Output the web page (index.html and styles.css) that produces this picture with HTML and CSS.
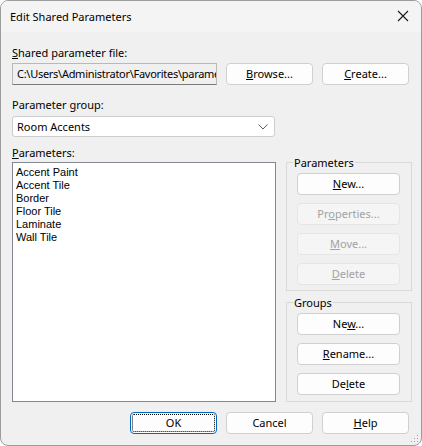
FILE: index.html
```html
<!DOCTYPE html>
<html lang="en">
<head>
<meta charset="utf-8">
<title>Edit Shared Parameters</title>
<link rel="stylesheet" href="styles.css">
</head>
<body>
<div class="dialog">
  <div class="titlebar">
    <span class="title">Edit Shared Parameters</span>
    <svg class="close" width="12" height="12" viewBox="0 0 12 12"><path d="M1 1L11 11M11 1L1 11" stroke="#1a1a1a" stroke-width="1.1" fill="none"/></svg>
  </div>
  <div class="content">
    <div class="label label-file"><u>S</u>hared parameter file:</div>
    <div class="file-row">
      <div class="edit">C:\Users\Administrator\Favorites\parame</div>
      <button class="btn"><u>B</u>rowse...</button>
      <button class="btn"><u>C</u>reate...</button>
    </div>
    <div class="label label-group">Parameter <u>g</u>roup:</div>
    <div class="combo">
      <span>Room Accents</span>
      <svg class="chev" width="10" height="6" viewBox="0 0 10 6"><path d="M0.5 0.5L5 5L9.5 0.5" stroke="#5f5f5f" stroke-width="1" fill="none"/></svg>
    </div>
    <div class="label label-params"><u>P</u>arameters:</div>
    <div class="main">
      <ul class="listbox">
        <li>Accent Paint</li>
        <li>Accent Tile</li>
        <li>Border</li>
        <li>Floor Tile</li>
        <li>Laminate</li>
        <li>Wall Tile</li>
      </ul>
      <div class="side">
        <fieldset class="group group-params">
          <legend>Parameters</legend>
          <button class="btn"><u>N</u>ew...</button>
          <button class="btn" disabled>Pr<u>o</u>perties...</button>
          <button class="btn" disabled><u>M</u>ove...</button>
          <button class="btn" disabled><u>D</u>elete</button>
        </fieldset>
        <fieldset class="group group-groups">
          <legend>Groups</legend>
          <button class="btn">Ne<u>w</u>...</button>
          <button class="btn"><u>R</u>ename...</button>
          <button class="btn">De<u>l</u>ete</button>
        </fieldset>
      </div>
    </div>
    <div class="footer">
      <button class="btn btn-default">OK</button>
      <button class="btn">Cancel</button>
      <button class="btn"><u>H</u>elp</button>
    </div>
  </div>
  <svg class="grip" width="8" height="8" viewBox="0 0 8 8">
    <rect x="6" y="0" width="1" height="1" fill="#a0a0a0"/>
    <rect x="3" y="3" width="1" height="1" fill="#a0a0a0"/>
    <rect x="6" y="3" width="1" height="1" fill="#a0a0a0"/>
    <rect x="0" y="6" width="1" height="1" fill="#a0a0a0"/>
    <rect x="3" y="6" width="1" height="1" fill="#a0a0a0"/>
    <rect x="6" y="6" width="1" height="1" fill="#a0a0a0"/>
  </svg>
</div>
</body>
</html>
```

FILE: styles.css
```css
html, body {
  margin: 0;
  padding: 0;
  background: #ffffff;
}

body {
  font-family: "Noto Sans", "Open Sans", sans-serif;
  font-size: 11px;
  color: #000;
}

.dialog {
  position: relative;
  width: 422px;
  height: 446px;
  box-sizing: border-box;
  border: 1px solid #9c9c9c;
  border-radius: 8px;
  background: #f0f0f0;
  overflow: hidden;
  display: flex;
  flex-direction: column;
}

.titlebar {
  height: 31px;
  flex: none;
  display: flex;
  align-items: center;
  justify-content: space-between;
  padding: 0 12px 0 9px;
  background: #f4f4f4;
}

.title {
  line-height: 15px;
  margin-top: -1px;
}

.close {
  margin-top: -2px;
}

.content {
  padding: 0 10px 0 11px;
  display: flex;
  flex-direction: column;
}

.label {
  line-height: 15px;
  height: 15px;
}

.label-file {
  margin-top: 13px;
}

.file-row {
  margin-top: 3px;
  display: flex;
  gap: 9px;
  height: 22px;
  padding-right: 2px;
}

.edit {
  width: 205px;
  box-sizing: border-box;
  height: 22px;
  line-height: 20px;
  padding-left: 4px;
  letter-spacing: -0.28px;
  white-space: nowrap;
  overflow: hidden;
  border: 1px solid #b9b9b9;
  border-bottom-color: #7a7a7a;
  background: #f0f0f0;
}

.btn {
  font-family: inherit;
  font-size: 11px;
  color: #000;
  width: 87px;
  height: 22px;
  padding: 0;
  box-sizing: border-box;
  background: #fdfdfd;
  border: 1px solid #d0d0d0;
  border-radius: 4px;
  line-height: 18px;
  text-align: center;
}

.btn:disabled {
  background: #f5f5f5;
  border-color: #e5e5e5;
  color: #a2a2a2;
}

.btn-default {
  border-color: #0067c0;
  outline: 1px dotted #000;
  outline-offset: -3px;
}

.label-group {
  margin-top: 12px;
}

.combo {
  margin-top: 4px;
  width: 263px;
  height: 21px;
  box-sizing: border-box;
  border: 1px solid #cdcdcd;
  border-radius: 3px;
  background: #fff;
  display: flex;
  align-items: center;
  justify-content: space-between;
  padding: 0 6px 0 4px;
}

.combo span {
  line-height: 15px;
}

.label-params {
  margin-top: 8px;
}

.main {
  display: grid;
  grid-template-columns: 264px 126px;
  column-gap: 10px;
  align-items: start;
}

.listbox {
  margin: 2px 0 0;
  list-style: none;
  height: 240px;
  box-sizing: border-box;
  border: 1px solid #828790;
  background: #fff;
  padding: 3px 0 0 3px;
  font-family: "Liberation Sans", Arial, sans-serif;
  font-size: 11px;
}

.listbox li {
  height: 13px;
  line-height: 13px;
}

.side {
  display: flex;
  flex-direction: column;
  gap: 4px;
  margin-top: -5px;
}

.group {
  margin: 0;
  border: 1px solid #d9d9d9;
  padding: 3px 11px 5px 10px;
  display: flex;
  flex-direction: column;
  gap: 8px;
  min-width: 0;
}

.group legend {
  padding: 0 1px;
  margin-left: -4px;
  line-height: 15px;
}

.group .btn {
  width: 103px;
}

.group-groups {
  padding-bottom: 6px;
}

.footer {
  margin-top: 10px;
  display: flex;
  justify-content: flex-end;
  gap: 9px;
  padding-right: 2px;
}

.grip {
  position: absolute;
  right: 2px;
  bottom: 2px;
}
```
